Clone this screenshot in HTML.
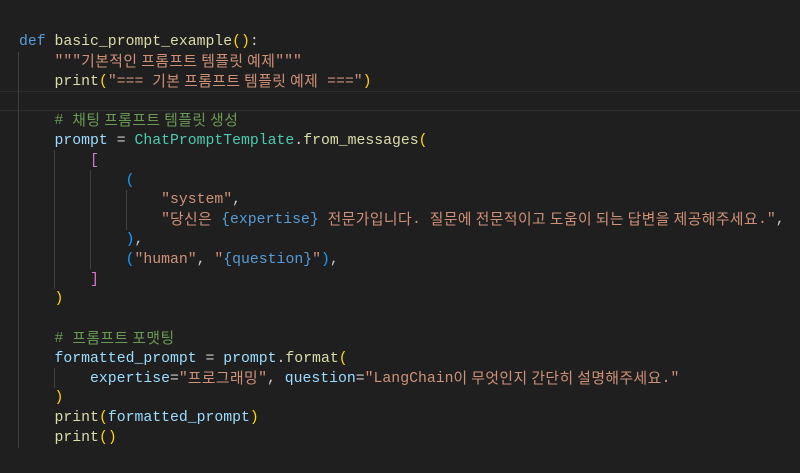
<!DOCTYPE html>
<html><head><meta charset="utf-8"><style>
html,body{margin:0;padding:0;background:#1f1f1f;width:800px;height:473px;overflow:hidden}
.code{position:absolute;left:19px;top:33px;font-family:"Liberation Mono",monospace;font-size:14.8px;color:#cccccc}
.code div{height:19.8px;line-height:19.8px;white-space:pre;overflow:visible}
.k{font-family:"Noto Sans CJK KR",sans-serif;font-size:14.8px;letter-spacing:0.45px;line-height:1;position:relative;top:1px}
.kw{color:#569cd6}.fn{color:#dcdcaa}.s{color:#ce9178}.c{color:#6a9955}.cl{color:#4ec9b0}.v{color:#9cdcfe}
.y{color:#ffd700}.p{color:#da70d6}.b{color:#179fff}.ib{color:#569cd6}
.g{position:absolute;width:1px;background:#404040}
.hl{position:absolute;left:0;width:800px;top:91px;height:18px;border-top:1px solid #2c2c2c;border-bottom:1px solid #2c2c2c}
</style></head><body>
<div class="hl"></div>
<div class="g" style="left:18px;top:52px;height:396px"></div>
<div class="g" style="left:54px;top:150px;height:139px"></div>
<div class="g" style="left:90px;top:170px;height:99px"></div>
<div class="g" style="left:126px;top:190px;height:40px"></div>
<div class="g" style="left:54px;top:368px;height:20px"></div>
<div class="code"><div><span class="kw">def</span> <span class="fn">basic_prompt_example</span><span class="y">()</span>:</div><div>    <span class="s">"""<span class="k">기본적인 프롬프트 템플릿 예제</span>"""</span></div><div>    <span class="fn">print</span><span class="y">(</span><span class="s">"=== <span class="k">기본 프롬프트 템플릿 예제</span> ==="</span><span class="y">)</span></div><div> </div><div>    <span class="c"># <span class="k">채팅 프롬프트 템플릿 생성</span></span></div><div>    <span class="v">prompt</span> = <span class="cl">ChatPromptTemplate</span>.<span class="fn">from_messages</span><span class="y">(</span></div><div>        <span class="p">[</span></div><div>            <span class="b">(</span></div><div>                <span class="s">"system"</span>,</div><div>                <span class="s">"<span class="k">당신은</span> </span><span class="ib">{expertise}</span><span class="s"> <span class="k">전문가입니다</span>. <span class="k">질문에 전문적이고 도움이 되는 답변을 제공해주세요</span>."</span>,</div><div>            <span class="b">)</span>,</div><div>            <span class="b">(</span><span class="s">"human"</span>, <span class="s">"</span><span class="ib">{question}</span><span class="s">"</span><span class="b">)</span>,</div><div>        <span class="p">]</span></div><div>    <span class="y">)</span></div><div> </div><div>    <span class="c"># <span class="k">프롬프트 포맷팅</span></span></div><div>    <span class="v">formatted_prompt</span> = <span class="v">prompt</span>.<span class="fn">format</span><span class="y">(</span></div><div>        <span class="v">expertise</span>=<span class="s">"<span class="k">프로그래밍</span>"</span>, <span class="v">question</span>=<span class="s">"LangChain<span class="k">이 무엇인지 간단히 설명해주세요</span>."</span></div><div>    <span class="y">)</span></div><div>    <span class="fn">print</span><span class="y">(</span><span class="v">formatted_prompt</span><span class="y">)</span></div><div>    <span class="fn">print</span><span class="y">()</span></div></div>
</body></html>
